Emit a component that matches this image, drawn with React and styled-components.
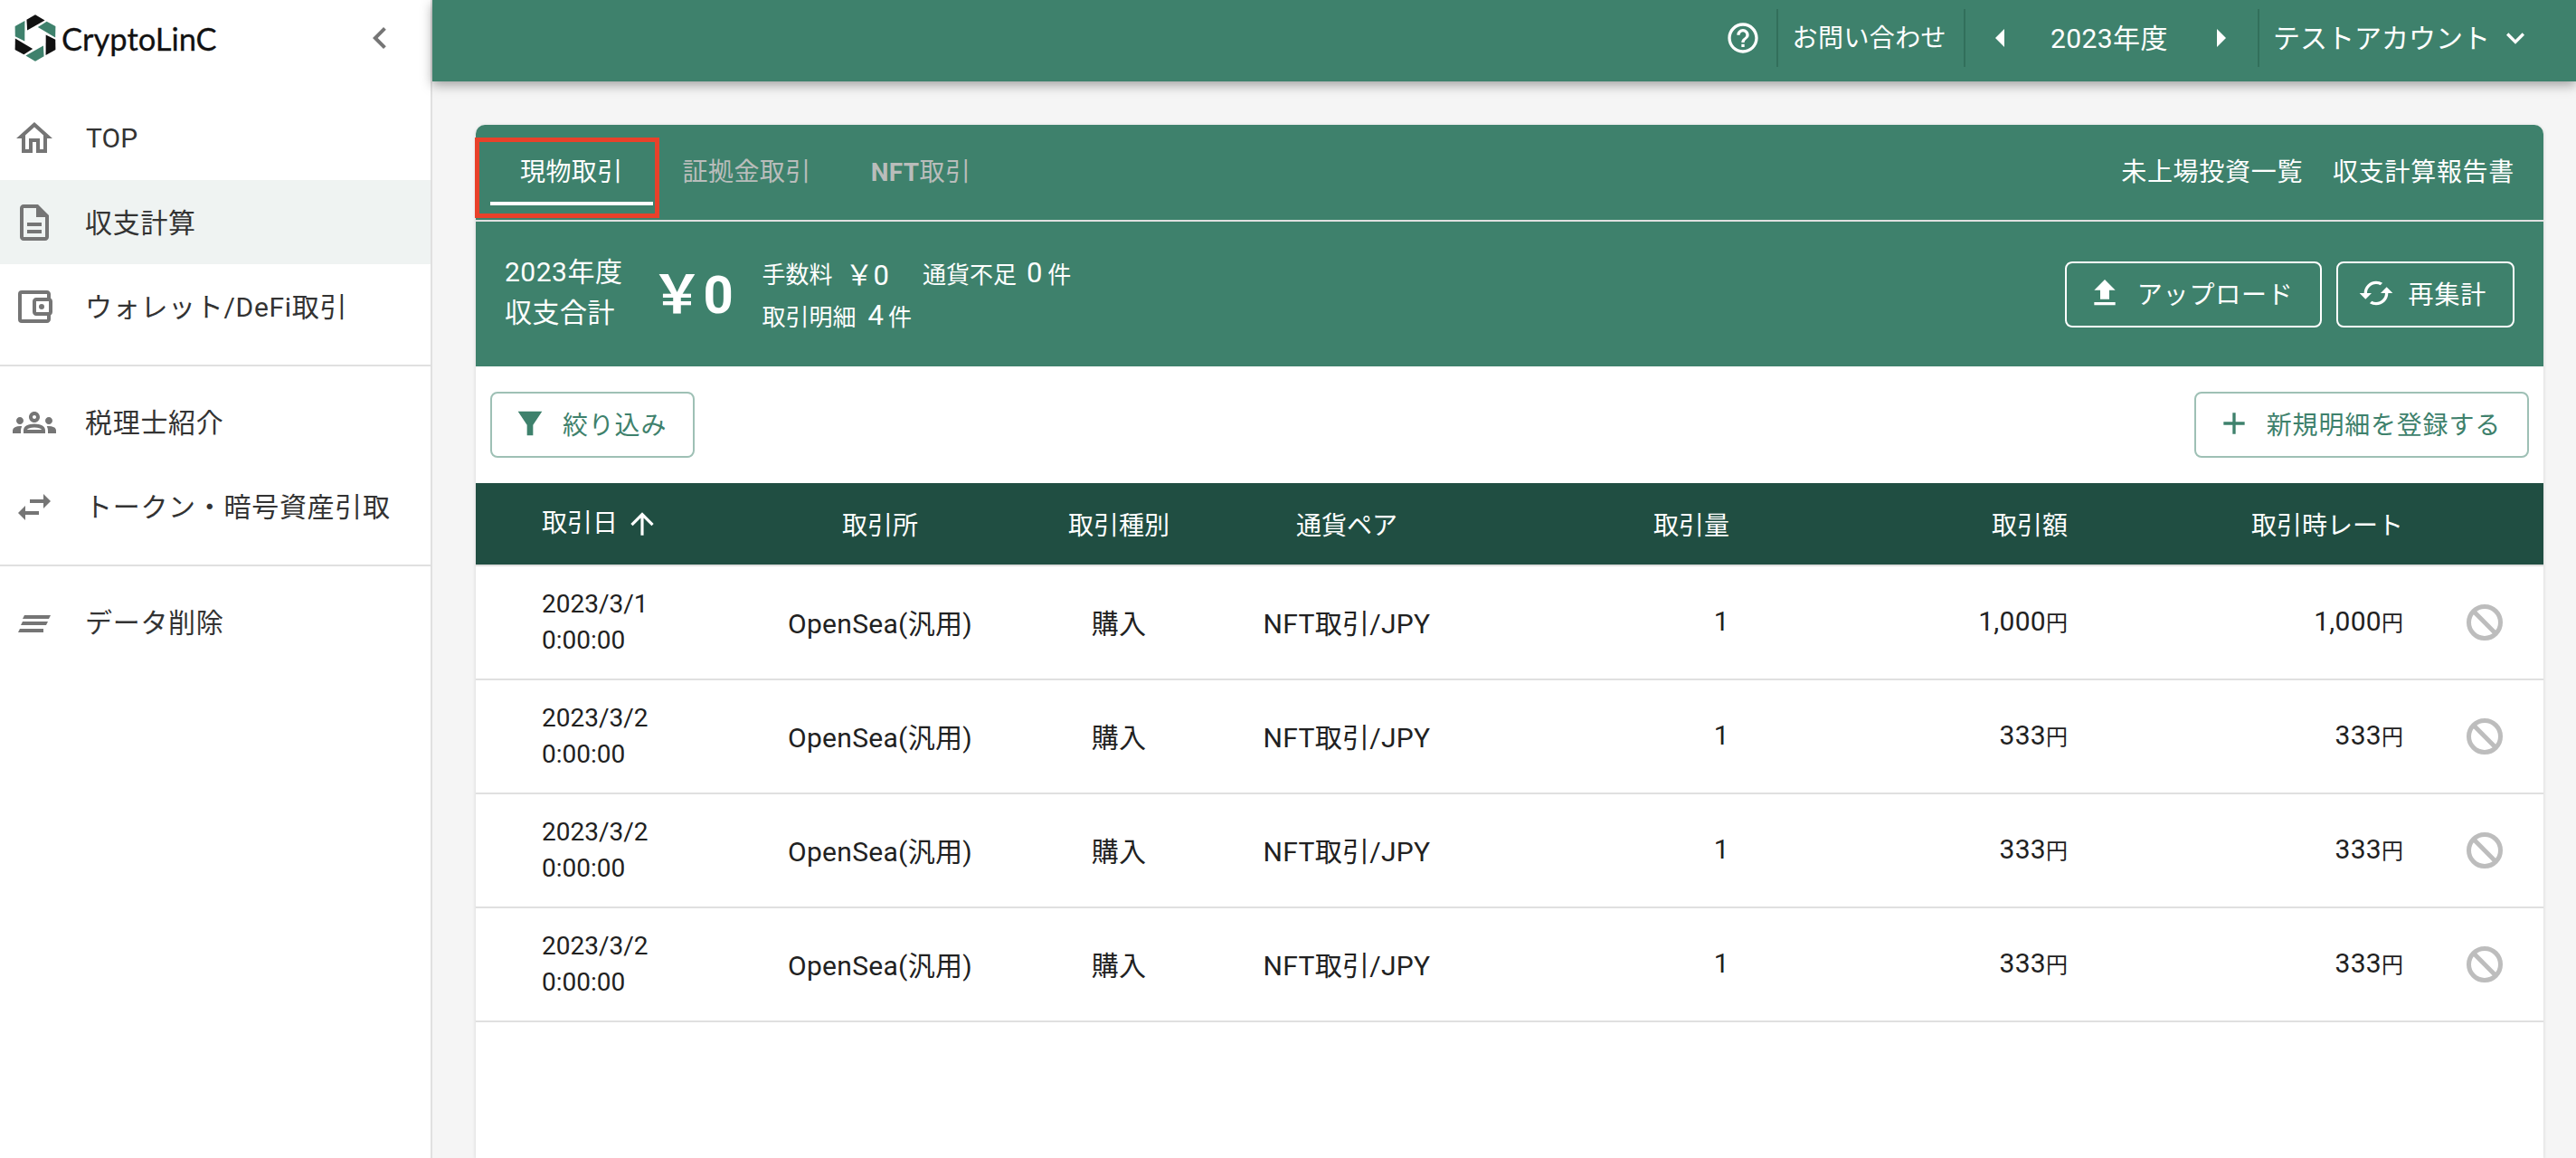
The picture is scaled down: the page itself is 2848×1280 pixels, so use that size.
import React from 'react'
import styled, { createGlobalStyle } from 'styled-components'
import {
  MdOutlineHome,
  MdOutlineAccountBalanceWallet,
  MdOutlineGroups,
  MdChevronLeft,
  MdHelpOutline,
  MdArrowLeft,
  MdArrowRight,
  MdExpandMore,
  MdFileUpload,
  MdCached,
  MdAdd,
  MdArrowUpward,
} from 'react-icons/md'

const GREEN = '#3e816c'
const DARK = '#204e42'
const COLUMNS = '304px 286px 242px 262px 292px 374px 371px 1fr'

const rows = [
  { date: '2023/3/1', amount: '1,000' },
  { date: '2023/3/2', amount: '333' },
  { date: '2023/3/2', amount: '333' },
  { date: '2023/3/2', amount: '333' },
]

const DocIcon = () => (
  <svg width="48" height="48" viewBox="0 0 24 24" fill="currentColor">
    <path d="M8 16h8v2H8zm0-4h8v2H8zm6-10H6c-1.1 0-2 .9-2 2v16c0 1.1.89 2 1.99 2H18c1.1 0 2-.9 2-2V8l-6-6zm4 18H6V4h7v5h5v11z" />
    <path d="M13 3h1l5 5v1h-6z" />
  </svg>
)

const TransferIcon = () => (
  <svg width="48" height="48" viewBox="0 0 24 24" fill="currentColor">
    <path d="M21 9l-4-4v3H9.5v2H17v3z" />
    <path d="M3 15.5l4 4v-3h7.5v-2H7v-3z" />
  </svg>
)

const LinesIcon = () => (
  <svg width="48" height="48" viewBox="0 0 48 48" fill="currentColor">
    <path d="M13 16h29l-2 4H11z" />
    <path d="M11 23h28l-2 4H9z" />
    <path d="M8 31h26v4H6z" />
  </svg>
)

const FilterIcon = () => (
  <svg width="40" height="40" viewBox="0 0 24 24" fill="currentColor">
    <path d="M4 4h16l-6 9v7h-4v-7z" />
  </svg>
)

const BlockIcon = () => (
  <svg width="48" height="48" viewBox="0 0 48 48" fill="none" stroke="currentColor" strokeWidth="5">
    <circle cx="24" cy="24" r="17.5" />
    <path d="M11.6 11.6l24.8 24.8" />
  </svg>
)

const LogoMark = () => (
  <svg width="46" height="52" viewBox="18 18 137 154">
    {[0, 1, 2, 3, 4, 5].map((i) => (
      <polygon
        key={i}
        points="58,35 86.5,18 118,37 60,70"
        fill={i % 2 === 0 ? '#111' : GREEN}
        transform={`rotate(${i * 60} 86.5 95)`}
      />
    ))}
  </svg>
)

const App = () => {
  return (
    <>
      <GlobalStyle />
      <Layout>
        <Sidebar>
          <SideHead>
            <Logo>
              <LogoMark />
              <LogoText>CryptoLinC</LogoText>
            </Logo>
            <Collapse><MdChevronLeft size={48} /></Collapse>
          </SideHead>
          <NavGroup>
            <NavItem><MdOutlineHome size={48} />TOP</NavItem>
            <NavItem $active><DocIcon /><NavLabel>収支計算</NavLabel></NavItem>
            <NavItem><MdOutlineAccountBalanceWallet size={48} /><NavLabel>ウォレット/DeFi取引</NavLabel></NavItem>
          </NavGroup>
          <NavGroup>
            <NavItem><MdOutlineGroups size={48} /><NavLabel>税理士紹介</NavLabel></NavItem>
            <NavItem><TransferIcon /><NavLabel>トークン・暗号資産引取</NavLabel></NavItem>
          </NavGroup>
          <NavGroup $last>
            <NavItem><LinesIcon /><NavLabel>データ削除</NavLabel></NavItem>
          </NavGroup>
        </Sidebar>

        <Content>
          <TopBar>
            <BarSection $pl={0} $pr={17}><MdHelpOutline size={40} /></BarSection>
            <BarSection $divider $pl={16} $pr={19}><BarText>お問い合わせ</BarText></BarSection>
            <BarSection $divider $pl={15} $pr={17}>
              <MdArrowLeft size={48} />
              <YearText>2023年度</YearText>
              <MdArrowRight size={48} />
            </BarSection>
            <BarSection $divider $pl={15} $pr={47}>
              <AccountName>テストアカウント</AccountName>
              <MdExpandMore size={40} />
            </BarSection>
          </TopBar>

          <Main>
            <Card>
              <TabBar>
                <Tabs>
                  <Tab $active>
                    現物取引
                    <Highlight />
                  </Tab>
                  <Tab>証拠金取引</Tab>
                  <Tab><TabStrong>NFT</TabStrong>取引</Tab>
                </Tabs>
                <TabLinks>
                  <span>未上場投資一覧</span>
                  <span>収支計算報告書</span>
                </TabLinks>
              </TabBar>

              <Summary>
                <SummaryTitle>2023年度<br />収支合計</SummaryTitle>
                <Total>￥0</Total>
                <Meta>
                  <MetaLine>
                    <MetaLabel>手数料</MetaLabel>
                    <MetaValue $ml={14}>￥0</MetaValue>
                    <MetaLabel $ml={37}>通貨不足</MetaLabel>
                    <MetaValue $ml={11}>0</MetaValue>
                    <MetaLabel $ml={6}>件</MetaLabel>
                  </MetaLine>
                  <MetaLine>
                    <MetaLabel>取引明細</MetaLabel>
                    <MetaValue $ml={13}>4</MetaValue>
                    <MetaLabel $ml={5}>件</MetaLabel>
                  </MetaLine>
                </Meta>
                <SummaryActions>
                  <OutlineButton $light><MdFileUpload size={40} />アップロード</OutlineButton>
                  <OutlineButton $light><MdCached size={40} />再集計</OutlineButton>
                </SummaryActions>
              </Summary>

              <Toolbar>
                <OutlineButton><FilterIcon />絞り込み</OutlineButton>
                <OutlineButton><MdAdd size={40} />新規明細を登録する</OutlineButton>
              </Toolbar>

              <HeadRow>
                <DateCell>取引日<MdArrowUpward size={38} /></DateCell>
                <Cell $align="center">取引所</Cell>
                <Cell $align="center">取引種別</Cell>
                <Cell $align="center">通貨ペア</Cell>
                <Cell $align="right">取引量</Cell>
                <Cell $align="right">取引額</Cell>
                <Cell $align="right">取引時レート</Cell>
                <Cell />
              </HeadRow>

              {rows.map((row, i) => (
                <BodyRow key={i}>
                  <DateCell $stack>
                    <span>{row.date}</span>
                    <span>0:00:00</span>
                  </DateCell>
                  <BodyCell $align="center">OpenSea(汎用)</BodyCell>
                  <BodyCell $align="center">購入</BodyCell>
                  <BodyCell $align="center">NFT取引/JPY</BodyCell>
                  <BodyCell $align="right">1</BodyCell>
                  <BodyCell $align="right">{row.amount}<Yen>円</Yen></BodyCell>
                  <BodyCell $align="right">{row.amount}<Yen>円</Yen></BodyCell>
                  <ActionCell><BlockIcon /></ActionCell>
                </BodyRow>
              ))}
            </Card>
          </Main>
        </Content>
      </Layout>
    </>
  )
}

export default App

const GlobalStyle = createGlobalStyle`
  * {
    box-sizing: border-box;
  }
  html, body {
    margin: 0;
    padding: 0;
    height: 100%;
    background: #f5f5f5;
  }
  body {
    font-family: Roboto, "Noto Sans CJK JP", sans-serif;
    font-size: 28px;
    color: #212121;
  }
`
const Layout = styled.div`
  display: flex;
  height: 1280px;
  overflow: hidden;
`
const Sidebar = styled.aside`
  flex: 0 0 478px;
  background: #fff;
  border-right: 2px solid #e0e0e0;
`
const SideHead = styled.div`
  display: flex;
  justify-content: space-between;
  align-items: center;
  height: 84px;
  margin-bottom: 22px;
  padding: 0 32px 0 16px;
`
const Logo = styled.div`
  display: flex;
  align-items: center;
  gap: 6px;
`
const LogoText = styled.span`
  font-family: Lato, sans-serif;
  font-size: 34.5px;
  color: #111;
  -webkit-text-stroke: 0.3px #111;
`
const Collapse = styled.div`
  display: flex;
  color: #757575;
`
const NavGroup = styled.div`
  padding: 0 0 18px;
  border-bottom: ${(p) => (p.$last ? 'none' : '2px solid #e0e0e0')};
  & + & {
    padding-top: 15px;
  }
`
const NavItem = styled.div`
  display: flex;
  align-items: center;
  gap: 33px;
  height: 93px;
  padding-left: 14px;
  font-size: 30px;
  color: #333;
  background: ${(p) => (p.$active ? '#eff3f2' : 'transparent')};
  svg {
    flex: none;
    color: #757575;
  }
`
const NavLabel = styled.span`
  margin-left: -1px;
  padding-bottom: 4px;
  letter-spacing: 0.7px;
  white-space: nowrap;
`
const Content = styled.div`
  flex: 1;
  min-width: 0;
  display: flex;
  flex-direction: column;
`
const TopBar = styled.header`
  position: relative;
  z-index: 1;
  flex: 0 0 90px;
  display: flex;
  justify-content: flex-end;
  align-items: flex-start;
  padding-top: 10px;
  background: ${GREEN};
  color: #fff;
  box-shadow: 0 4px 12px rgba(0, 0, 0, 0.35);
`
const BarSection = styled.div`
  display: flex;
  align-items: center;
  height: 64px;
  padding: 0 ${(p) => p.$pr}px 0 ${(p) => p.$pl}px;
  border-left: ${(p) => (p.$divider ? '2px solid #326f5b' : 'none')};
`
const BarText = styled.span`
  padding-bottom: 4px;
  letter-spacing: 0.4px;
  white-space: nowrap;
`
const YearText = styled(BarText)`
  width: 131px;
  margin: 0 33px 0 31px;
  font-size: 30px;
`
const AccountName = styled(BarText)`
  font-size: 30px;
  margin-right: 8px;
  letter-spacing: 0;
`
const Main = styled.main`
  flex: 1;
  padding: 48px 36px 0 48px;
`
const Card = styled.section`
  height: 100%;
  background: #fff;
  border-radius: 10px 10px 0 0;
  box-shadow: 0 1px 4px rgba(0, 0, 0, 0.14);
`
const TabBar = styled.div`
  display: flex;
  justify-content: space-between;
  align-items: flex-start;
  height: 107px;
  padding: 14px 32px 0 16px;
  background: ${GREEN};
  border-radius: 10px 10px 0 0;
  border-bottom: 2px solid #e0e0e0;
`
const Tabs = styled.div`
  display: flex;
`
const Tab = styled.div`
  position: relative;
  height: 75px;
  padding: 0 33px;
  line-height: 78px;
  letter-spacing: 0.4px;
  white-space: nowrap;
  color: ${(p) => (p.$active ? '#fff' : '#b9bdbb')};
  border-bottom: 4px solid ${(p) => (p.$active ? '#fff' : 'transparent')};
`
const TabStrong = styled.span`
  font-weight: 700;
`
const Highlight = styled.span`
  position: absolute;
  left: -17px;
  top: 0;
  width: 204px;
  height: 89px;
  border: 5px solid #e8412a;
  pointer-events: none;
`
const TabLinks = styled.div`
  display: flex;
  gap: 33px;
  line-height: 78px;
  letter-spacing: 0.7px;
  color: #fff;
`
const Summary = styled.div`
  display: flex;
  align-items: center;
  height: 160px;
  padding: 0 32px;
  background: ${GREEN};
  color: #fff;
`
const SummaryTitle = styled.div`
  padding-bottom: 4px;
  font-size: 30px;
  line-height: 45px;
  letter-spacing: 0.5px;
  white-space: nowrap;
`
const Total = styled.div`
  width: 123px;
  margin-left: 31px;
  padding-bottom: 8px;
  font-size: 58px;
  font-weight: 700;
  white-space: nowrap;
`
const Meta = styled.div`
  display: flex;
  flex-direction: column;
  gap: 9px;
`
const MetaLine = styled.div`
  display: flex;
  align-items: center;
  height: 38px;
`
const MetaLabel = styled.span`
  margin-left: ${(p) => p.$ml || 0}px;
  font-size: 26px;
  white-space: nowrap;
`
const MetaValue = styled.span`
  margin-left: ${(p) => p.$ml || 0}px;
  font-size: 31px;
  white-space: nowrap;
`
const SummaryActions = styled.div`
  display: flex;
  gap: 16px;
  margin-left: auto;
`
const OutlineButton = styled.button`
  display: flex;
  align-items: center;
  gap: 16px;
  height: 73px;
  padding: 0 29px 3px 22px;
  font: inherit;
  font-size: 28px;
  letter-spacing: 0.8px;
  white-space: nowrap;
  color: ${(p) => (p.$light ? '#fff' : GREEN)};
  background: transparent;
  border: 2px solid ${(p) => (p.$light ? '#fff' : '#9ec0b5')};
  border-radius: 8px;
`
const Toolbar = styled.div`
  display: flex;
  justify-content: space-between;
  padding: 28px 16px;
`
const HeadRow = styled.div`
  display: grid;
  grid-template-columns: ${COLUMNS};
  align-items: center;
  height: 92px;
  background: ${DARK};
  border-bottom: 2px solid #e0e0e0;
  color: #fff;
`
const BodyRow = styled.div`
  display: grid;
  grid-template-columns: ${COLUMNS};
  align-items: center;
  height: 126px;
  border-bottom: 2px solid #e0e0e0;
`
const Cell = styled.div`
  text-align: ${(p) => p.$align || 'left'};
  white-space: nowrap;
`
const BodyCell = styled(Cell)`
  padding-bottom: 3px;
  font-size: 30px;
  letter-spacing: 0.3px;
`
const DateCell = styled.div`
  display: flex;
  flex-direction: ${(p) => (p.$stack ? 'column' : 'row')};
  align-items: ${(p) => (p.$stack ? 'flex-start' : 'center')};
  gap: ${(p) => (p.$stack ? 0 : 8)}px;
  padding-left: 73px;
  line-height: 40px;
`
const Yen = styled.span`
  font-size: 24px;
  letter-spacing: 0;
`
const ActionCell = styled.div`
  display: flex;
  padding-left: 66px;
  color: #bdbdbd;
`
